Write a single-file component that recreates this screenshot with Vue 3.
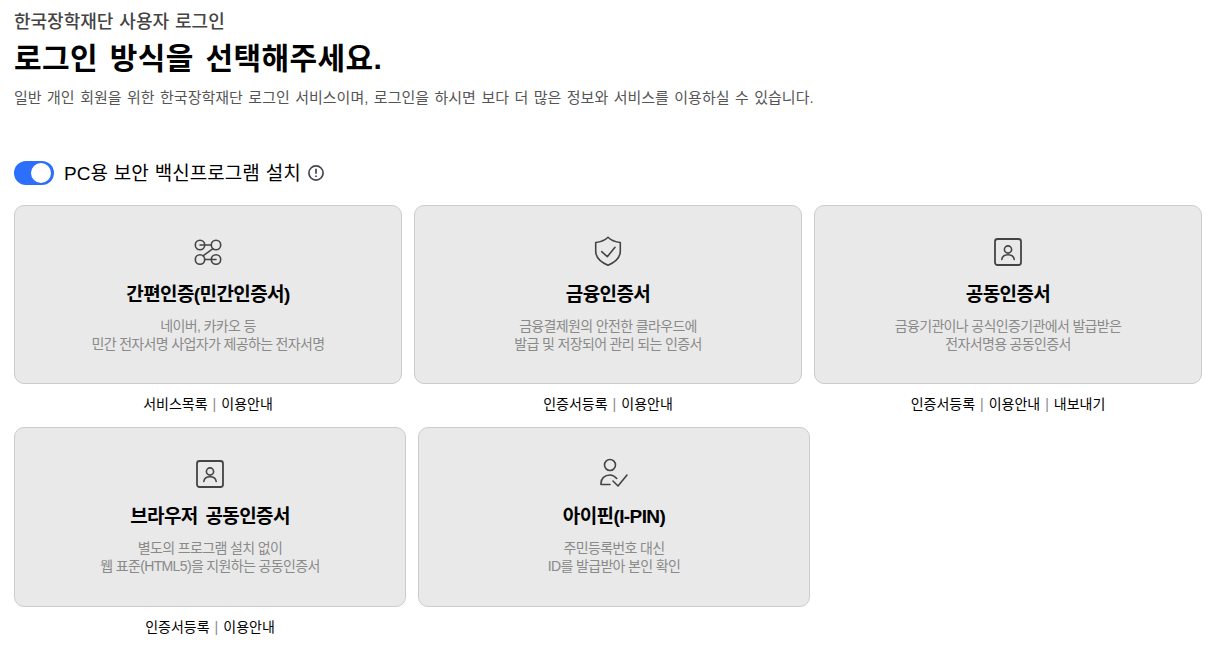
<script setup>
const rows = [
  {
    cls: "row-top",
    cards: [
      { icon: "link", title: "간편인증(민간인증서)", desc: ["네이버, 카카오 등", "민간 전자서명 사업자가 제공하는 전자서명"], links: ["서비스목록", "이용안내"] },
      { icon: "shield", title: "금융인증서", desc: ["금융결제원의 안전한 클라우드에", "발급 및 저장되어 관리 되는 인증서"], links: ["인증서등록", "이용안내"] },
      { icon: "person", title: "공동인증서", desc: ["금융기관이나 공식인증기관에서 발급받은", "전자서명용 공동인증서"], links: ["인증서등록", "이용안내", "내보내기"] },
    ],
  },
  {
    cls: "row-bottom",
    cards: [
      { icon: "person", title: "브라우저 공동인증서", desc: ["별도의 프로그램 설치 없이", "웹 표준(HTML5)을 지원하는 공동인증서"], links: ["인증서등록", "이용안내"] },
      { icon: "check", title: "아이핀(I-PIN)", desc: ["주민등록번호 대신", "ID를 발급받아 본인 확인"], links: [] },
    ],
  },
];
</script>

<template>
  <main class="page">
    <p class="eyebrow">한국장학재단 사용자 로그인</p>
    <h1 class="title">로그인 방식을 선택해주세요.</h1>
    <p class="lead">일반 개인 회원을 위한 한국장학재단 로그인 서비스이며, 로그인을 하시면 보다 더 많은 정보와 서비스를 이용하실 수 있습니다.</p>

    <div class="toggle-row">
      <span class="toggle"><span class="knob"></span></span>
      <span class="toggle-label">PC용 보안 백신프로그램 설치</span>
      <svg class="info" viewBox="0 0 16 16" width="16" height="16" fill="none" stroke="#44464f" stroke-width="1.7">
        <circle cx="8" cy="8" r="7.100" />
        <path d="M8 3.800v5" />
        <path d="M8 10.400v1.700" />
      </svg>
    </div>

    <section v-for="row in rows" :key="row.cls" class="row" :class="row.cls">
      <div v-for="card in row.cards" :key="card.title" class="item">
        <div class="card">
          <svg class="icon" viewBox="0 0 28 30" width="28" height="30" fill="none" stroke="#444" stroke-width="1.6" stroke-linecap="round" stroke-linejoin="round">
            <template v-if="card.icon === 'link'">
              <circle cx="6" cy="9" r="4.700" />
              <circle cx="22" cy="9" r="4.700" />
              <circle cx="6" cy="23.500" r="4.700" />
              <circle cx="22" cy="23.500" r="4.700" />
              <path d="M6 9h11.300M10.700 23.500H22M19 12.700 9 19.800" />
            </template>
            <template v-else-if="card.icon === 'shield'">
              <path d="M14 1.300C16.500 3.800 21 6 26.300 6.500V15C26.300 22 20.500 26.500 14 29.300 7.500 26.500 1.700 22 1.700 15V6.500C7 6 11.500 3.800 14 1.300Z" />
              <path d="M7.700 15.700 13.300 20.700 21 11.300" />
            </template>
            <template v-else-if="card.icon === 'person'">
              <rect x="1" y="3" width="26" height="26" rx="2.500" stroke-width="1.800" />
              <circle cx="14" cy="13.500" r="3.600" />
              <path d="M7.800 23.500C8.300 20 11 18.700 14 18.700S19.700 20 20.200 23.500" />
            </template>
            <template v-else>
              <circle cx="10" cy="7" r="5.500" />
              <path d="M1 26.500C0.500 20 5 17 10 17 12.500 17 15 18.500 16.700 20.500M1 26.500H10M13 23 18 28 27 17" />
            </template>
          </svg>
          <h2 class="card-title">{{ card.title }}</h2>
          <p class="card-desc">
            <span v-for="line in card.desc" :key="line">{{ line }}</span>
          </p>
        </div>
        <div class="links">
          <template v-for="(link, i) in card.links" :key="link">
            <span v-if="i > 0" class="sep">|</span>
            <a class="link">{{ link }}</a>
          </template>
        </div>
      </div>
    </section>
  </main>
</template>

<style>
body {
  background: #fff;
}
</style>

<style scoped>
.page {
  padding: 11px 14px 0;
  font-family: "Liberation Sans", "Noto Sans CJK KR", sans-serif;
  color: #000;
}

.eyebrow {
  margin: 0;
  font-size: 18px;
  line-height: 22px;
  font-weight: 500;
  word-spacing: 1px;
  color: #444;
}

.title {
  margin: 4px 0 0;
  font-size: 30px;
  line-height: 44px;
  font-weight: 700;
  letter-spacing: 0.4px;
  word-spacing: 3px;
}

.lead {
  margin: 7px 0 0;
  font-size: 15px;
  line-height: 20px;
  word-spacing: 1.300px;
  color: #555;
}

.toggle-row {
  display: flex;
  align-items: center;
  margin-top: 53px;
  height: 24px;
}

.toggle {
  display: block;
  position: relative;
  width: 40px;
  height: 24px;
  border-radius: 12px;
  background: #2b6ffb;
}

.knob {
  position: absolute;
  top: 2px;
  right: 3px;
  width: 20px;
  height: 20px;
  border-radius: 50%;
  background: #fff;
}

.toggle-label {
  margin-left: 10px;
  padding-top: 2px;
  font-size: 19px;
  line-height: 24px;
  word-spacing: 0.700px;
}

.info {
  margin-left: 7px;
}

.row {
  display: grid;
  column-gap: 12px;
}

.row-top {
  grid-template-columns: repeat(3, 388px);
  margin-top: 20px;
}

.row-bottom {
  grid-template-columns: repeat(2, 392px);
  margin-top: 13px;
}

.card {
  box-sizing: border-box;
  display: flex;
  flex-direction: column;
  align-items: center;
  height: 179px;
  padding-top: 30px;
  background: #e9e9e9;
  border: 1px solid #ccc;
  border-radius: 10px;
}

.row-bottom .card {
  height: 180px;
}

.card-title {
  margin: 14px 0 0;
  font-size: 19px;
  line-height: 30px;
  font-weight: 700;
  letter-spacing: -0.6px;
  word-spacing: 3px;
}

.card-desc {
  display: flex;
  flex-direction: column;
  align-items: center;
  margin: 7px 0 0;
  font-size: 14px;
  line-height: 18px;
  letter-spacing: -0.65px;
  color: #8a8a8a;
}

.links {
  display: flex;
  justify-content: center;
  align-items: center;
  height: 20px;
  margin-top: 10px;
  font-size: 14px;
  line-height: 20px;
}

.sep {
  margin: 0 5px;
  color: #888;
}
</style>
